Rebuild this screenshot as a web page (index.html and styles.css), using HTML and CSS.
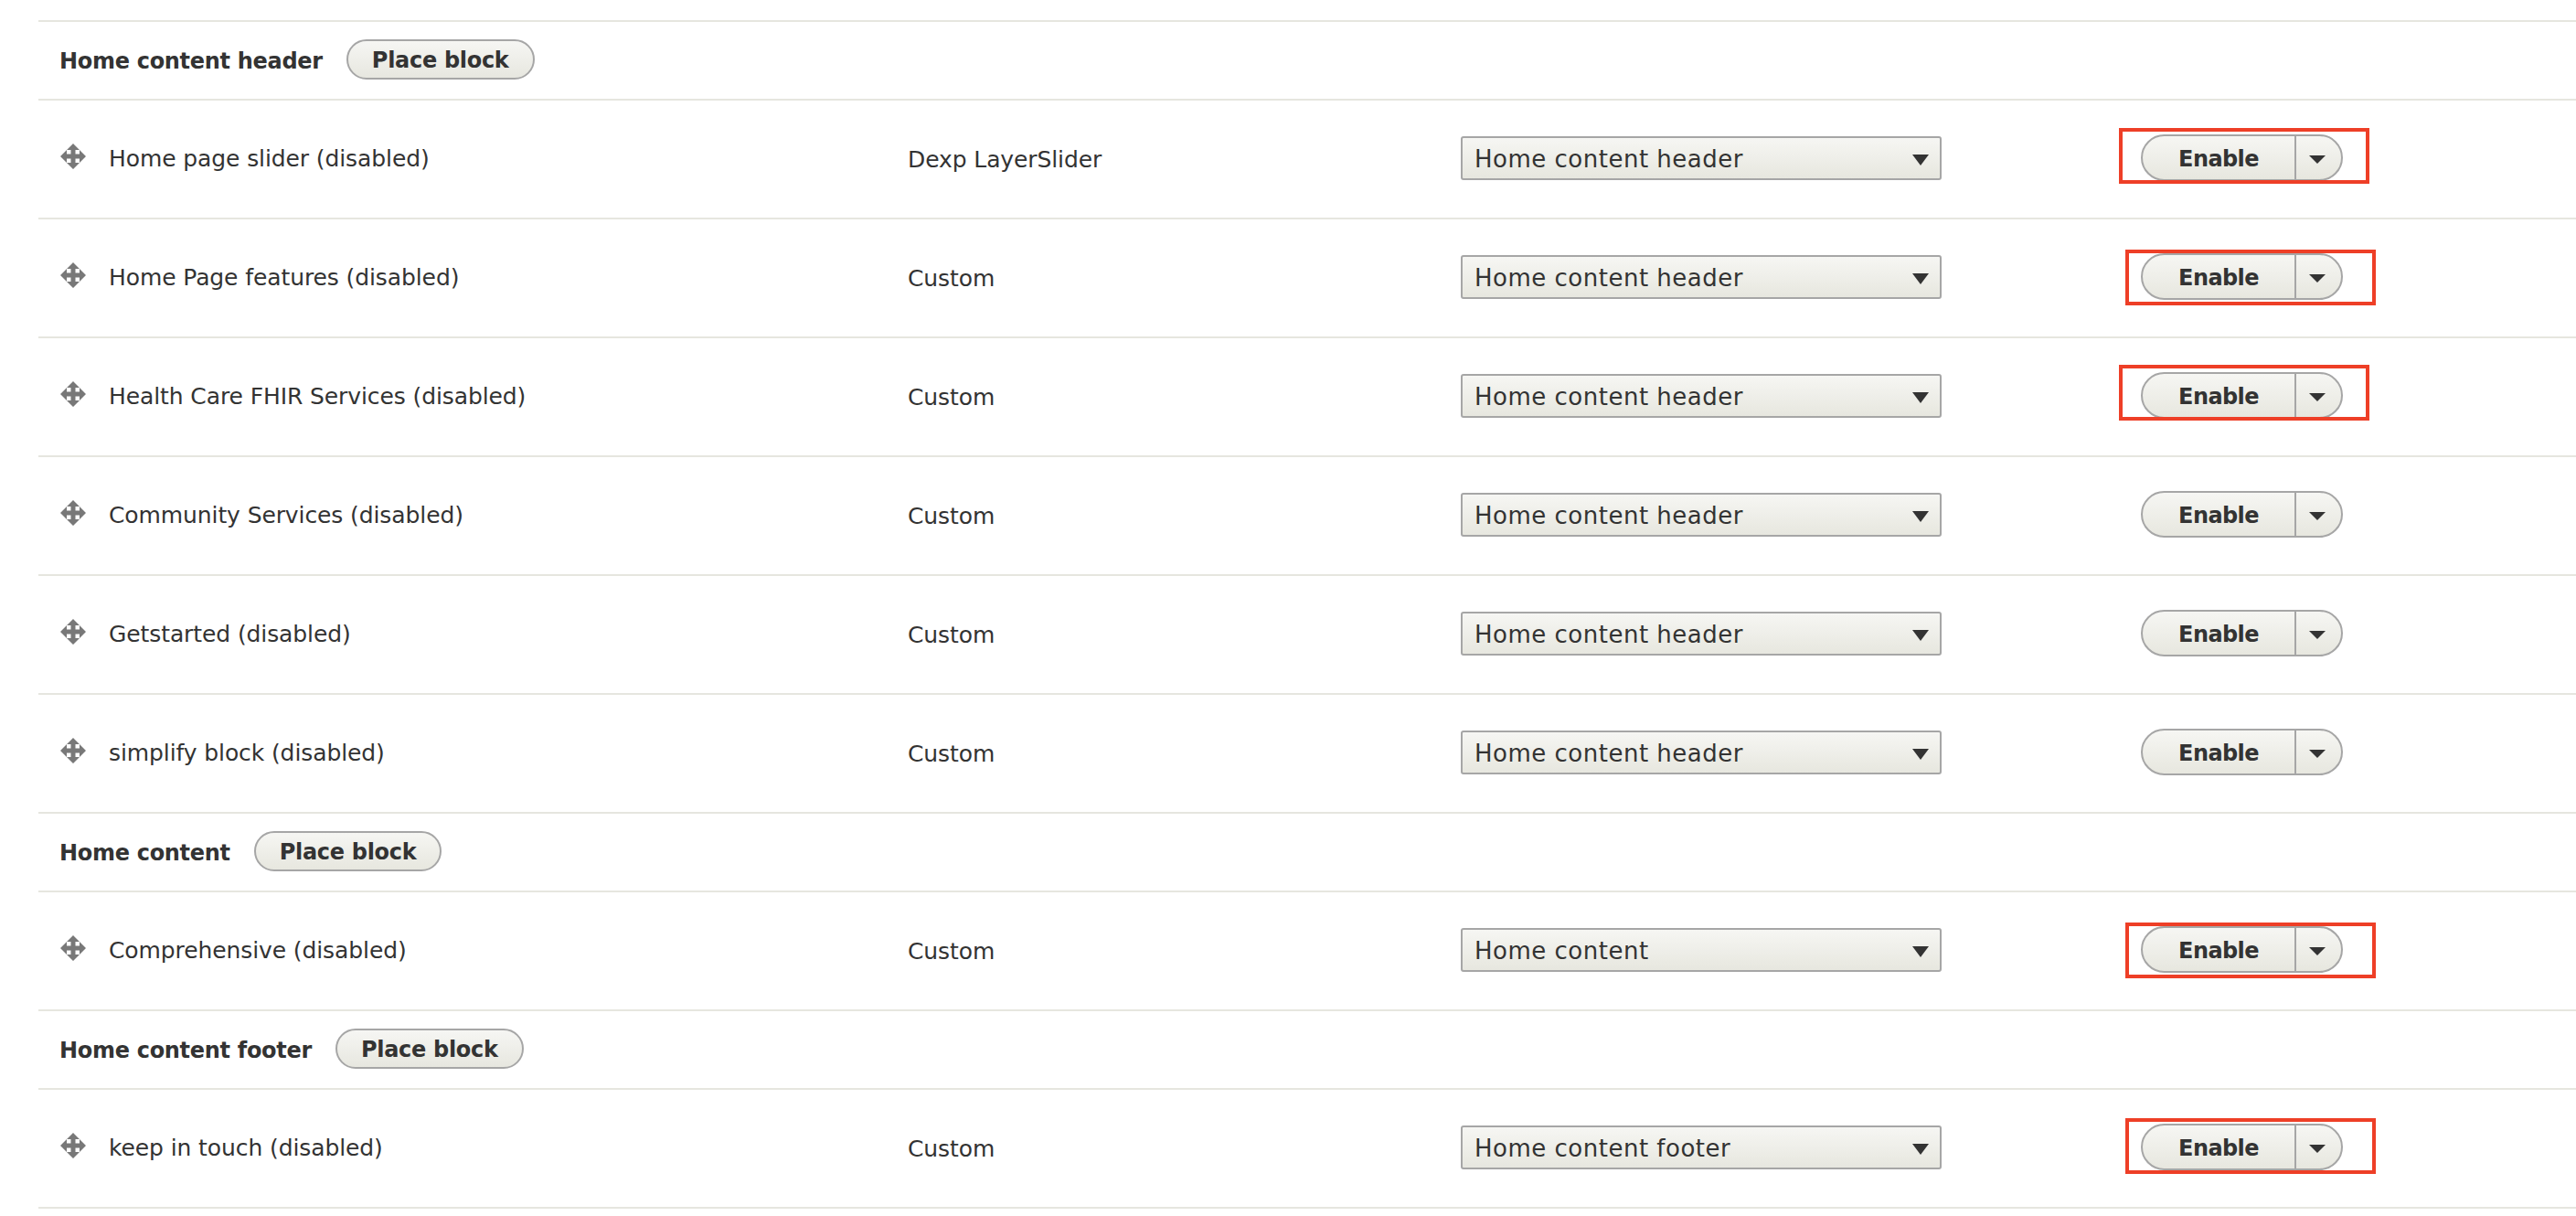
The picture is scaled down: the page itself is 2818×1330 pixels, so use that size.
FILE: index.html
```html
<!DOCTYPE html>
<html lang="en">
<head>
<meta charset="utf-8">
<title>Block layout</title>
<link rel="stylesheet" href="styles.css">
</head>
<body>
<svg class="sprite" width="0" height="0" aria-hidden="true"><defs>
<symbol id="move" viewBox="0 0 28 28"><path fill="#787878" d="M14 0L21 7H16.5V11.5H21V7L28 14L21 21V16.5H16.5V21H21L14 28L7 21H11.5V16.5H7V21L0 14L7 7V11.5H11.5V7H7Z"/></symbol>
</defs></svg>
<main class="table">
  <section class="group">
    <div class="region"><strong>Home content header</strong><button class="place">Place block</button></div>
    <div class="row">
      <div class="c-name"><svg class="grip"><use href="#move"/></svg><span>Home page slider (disabled)</span></div>
      <div class="c-cat">Dexp LayerSlider</div>
      <div class="c-sel"><div class="select">Home content header</div></div>
      <div class="c-op"><div class="drop"><span class="main">Enable</span><span class="tog"></span><i class="mark mark-a"></i></div></div>
    </div>
    <div class="row">
      <div class="c-name"><svg class="grip"><use href="#move"/></svg><span>Home Page features (disabled)</span></div>
      <div class="c-cat">Custom</div>
      <div class="c-sel"><div class="select">Home content header</div></div>
      <div class="c-op"><div class="drop"><span class="main">Enable</span><span class="tog"></span><i class="mark mark-b"></i></div></div>
    </div>
    <div class="row">
      <div class="c-name"><svg class="grip"><use href="#move"/></svg><span>Health Care FHIR Services (disabled)</span></div>
      <div class="c-cat">Custom</div>
      <div class="c-sel"><div class="select">Home content header</div></div>
      <div class="c-op"><div class="drop"><span class="main">Enable</span><span class="tog"></span><i class="mark mark-c"></i></div></div>
    </div>
    <div class="row">
      <div class="c-name"><svg class="grip"><use href="#move"/></svg><span>Community Services (disabled)</span></div>
      <div class="c-cat">Custom</div>
      <div class="c-sel"><div class="select">Home content header</div></div>
      <div class="c-op"><div class="drop"><span class="main">Enable</span><span class="tog"></span></div></div>
    </div>
    <div class="row">
      <div class="c-name"><svg class="grip"><use href="#move"/></svg><span>Getstarted (disabled)</span></div>
      <div class="c-cat">Custom</div>
      <div class="c-sel"><div class="select">Home content header</div></div>
      <div class="c-op"><div class="drop"><span class="main">Enable</span><span class="tog"></span></div></div>
    </div>
    <div class="row">
      <div class="c-name"><svg class="grip"><use href="#move"/></svg><span>simplify block (disabled)</span></div>
      <div class="c-cat">Custom</div>
      <div class="c-sel"><div class="select">Home content header</div></div>
      <div class="c-op"><div class="drop"><span class="main">Enable</span><span class="tog"></span></div></div>
    </div>
  </section>
  <section class="group">
    <div class="region"><strong>Home content</strong><button class="place">Place block</button></div>
    <div class="row">
      <div class="c-name"><svg class="grip"><use href="#move"/></svg><span>Comprehensive (disabled)</span></div>
      <div class="c-cat">Custom</div>
      <div class="c-sel"><div class="select">Home content</div></div>
      <div class="c-op"><div class="drop"><span class="main">Enable</span><span class="tog"></span><i class="mark mark-b"></i></div></div>
    </div>
  </section>
  <section class="group">
    <div class="region"><strong>Home content footer</strong><button class="place">Place block</button></div>
    <div class="row">
      <div class="c-name"><svg class="grip"><use href="#move"/></svg><span>keep in touch (disabled)</span></div>
      <div class="c-cat">Custom</div>
      <div class="c-sel"><div class="select">Home content footer</div></div>
      <div class="c-op"><div class="drop"><span class="main">Enable</span><span class="tog"></span><i class="mark mark-d"></i></div></div>
    </div>
  </section>
</main>
</body>
</html>
```
FILE: styles.css
```css
* { box-sizing: border-box; }
html, body { margin: 0; background: #fff; }
body { padding: 22px 0 0 42px; width: 2818px; height: 1330px; overflow: hidden; font-family: "DejaVu Sans", sans-serif; font-size: 25px; letter-spacing: -0.1px; color: #333; }
.sprite { position: absolute; }
.table { width: 2776px; border-top: 2px solid #e6e6df; }
.region { height: 86px; display: flex; align-items: center; padding: 0 0 2px 23px; border-bottom: 2px solid #e6e6df; }
.region strong { font-weight: 700; font-size: 24px; letter-spacing: -0.3px; padding-top: 3px; }
.place { margin-left: 26px; height: 44px; padding: 2px 26px 0; border: 2px solid #a6a6a6; border-radius: 22px; background: linear-gradient(#f6f6f3, #e7e7df); font: 700 24px "DejaVu Sans", sans-serif; letter-spacing: -0.3px; color: #333; }
.row { height: 130px; display: flex; align-items: center; padding-bottom: 2px; border-bottom: 2px solid #e6e6df; }
.c-name { width: 951px; padding-left: 24px; display: flex; align-items: center; gap: 25px; }
.grip { width: 28px; height: 28px; flex: none; margin-top: -4px; }
.c-cat { width: 605px; padding-top: 2px; }
.c-sel { width: 744px; }
.select { width: 526px; height: 48px; padding: 2px 0 0 13px; display: flex; align-items: center; border: 2px solid #a6a6a6; border-radius: 3px; background: linear-gradient(#f6f6f3, #e7e7df); position: relative; font-size: 26px; letter-spacing: 0.5px; }
.select::after { content: ""; position: absolute; right: 12px; top: 18px; border: 9px solid transparent; border-top: 12px solid #333; border-bottom: 0; }
.drop { width: 221px; height: 51px; margin-top: -1px; display: flex; position: relative; border: 2px solid #a6a6a6; border-radius: 26px; background: linear-gradient(#f6f6f3, #e7e7df); }
.main { width: 168px; padding-top: 2px; display: flex; align-items: center; justify-content: center; font-weight: 700; font-size: 24px; letter-spacing: -0.6px; border-right: 2px solid #a6a6a6; }
.tog { flex: 1; position: relative; }
.tog::after { content: ""; position: absolute; left: 14px; top: 21px; border: 9px solid transparent; border-top: 9px solid #333; border-bottom: 0; }
.mark { position: absolute; border: 4px solid #ee3f27; height: 61px; width: 274px; }
.mark-a { left: -26px; top: -9px; }
.mark-b { left: -19px; top: -6px; }
.mark-c { left: -26px; top: -10px; }
.mark-d { left: -19px; top: -8px; }
```
